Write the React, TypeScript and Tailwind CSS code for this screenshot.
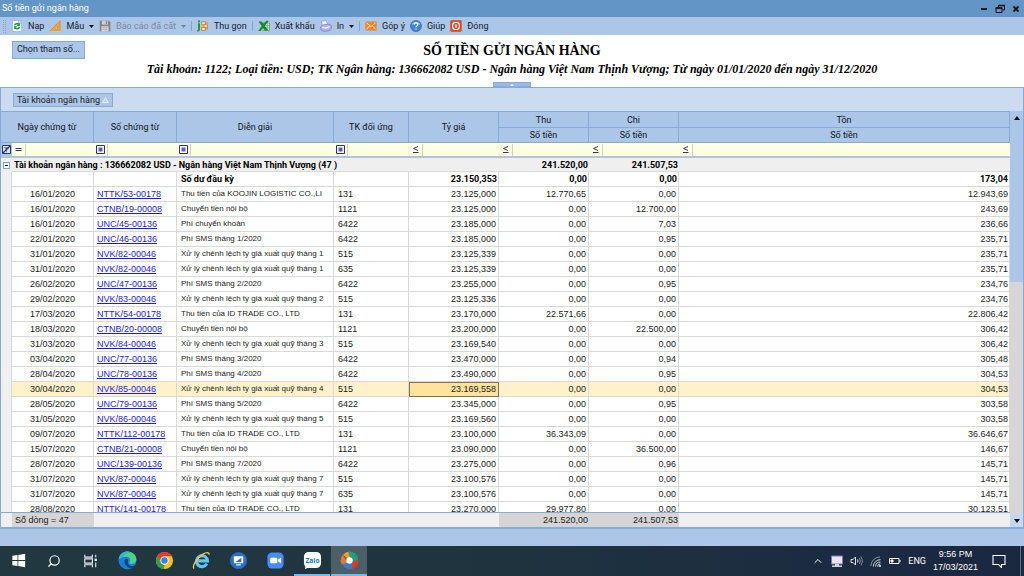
import type { ReactNode } from "react";
import { ChevronUp, Search } from "lucide-react";

type Row = [string, string, string, string, string, string, string, string];

const ROWS: Row[] = [
  ["16/01/2020", "NTTK/53-00178", "Thu tiền của KOOJIN LOGISTIC CO.,LI", "131", "23.125,000", "12.770,65", "0,00", "12.943,69"],
  ["16/01/2020", "CTNB/19-00008", "Chuyển tiền nội bộ", "1121", "23.125,000", "0,00", "12.700,00", "243,69"],
  ["16/01/2020", "UNC/45-00136", "Phí chuyển khoản", "6422", "23.185,000", "0,00", "7,03", "236,66"],
  ["22/01/2020", "UNC/46-00136", "Phí SMS tháng 1/2020", "6422", "23.185,000", "0,00", "0,95", "235,71"],
  ["31/01/2020", "NVK/82-00046", "Xử lý chênh lệch tỷ giá xuất quỹ tháng 1", "515", "23.125,339", "0,00", "0,00", "235,71"],
  ["31/01/2020", "NVK/82-00046", "Xử lý chênh lệch tỷ giá xuất quỹ tháng 1", "635", "23.125,339", "0,00", "0,00", "235,71"],
  ["26/02/2020", "UNC/47-00136", "Phí SMS tháng 2/2020", "6422", "23.255,000", "0,00", "0,95", "234,76"],
  ["29/02/2020", "NVK/83-00046", "Xử lý chênh lệch tỷ giá xuất quỹ tháng 2", "515", "23.125,336", "0,00", "0,00", "234,76"],
  ["17/03/2020", "NTTK/54-00178", "Thu tiền của ID TRADE CO., LTD", "131", "23.170,000", "22.571,66", "0,00", "22.806,42"],
  ["18/03/2020", "CTNB/20-00008", "Chuyển tiền nội bộ", "1121", "23.200,000", "0,00", "22.500,00", "306,42"],
  ["31/03/2020", "NVK/84-00046", "Xử lý chênh lệch tỷ giá xuất quỹ tháng 3", "515", "23.169,540", "0,00", "0,00", "306,42"],
  ["03/04/2020", "UNC/77-00136", "Phí SMS tháng 3/2020", "6422", "23.470,000", "0,00", "0,94", "305,48"],
  ["28/04/2020", "UNC/78-00136", "Phí SMS tháng 4/2020", "6422", "23.490,000", "0,00", "0,95", "304,53"],
  ["30/04/2020", "NVK/85-00046", "Xử lý chênh lệch tỷ giá xuất quỹ tháng 4", "515", "23.169,558", "0,00", "0,00", "304,53"],
  ["28/05/2020", "UNC/79-00136", "Phí SMS tháng 5/2020", "6422", "23.345,000", "0,00", "0,95", "303,58"],
  ["31/05/2020", "NVK/86-00046", "Xử lý chênh lệch tỷ giá xuất quỹ tháng 5", "515", "23.169,560", "0,00", "0,00", "303,58"],
  ["09/07/2020", "NTTK/112-00178", "Thu tiền của ID TRADE CO., LTD", "131", "23.100,000", "36.343,09", "0,00", "36.646,67"],
  ["15/07/2020", "CTNB/21-00008", "Chuyển tiền nội bộ", "1121", "23.090,000", "0,00", "36.500,00", "146,67"],
  ["28/07/2020", "UNC/139-00136", "Phí SMS tháng 7/2020", "6422", "23.275,000", "0,00", "0,96", "145,71"],
  ["31/07/2020", "NVK/87-00046", "Xử lý chênh lệch tỷ giá xuất quỹ tháng 7", "515", "23.100,576", "0,00", "0,00", "145,71"],
  ["31/07/2020", "NVK/87-00046", "Xử lý chênh lệch tỷ giá xuất quỹ tháng 7", "635", "23.100,576", "0,00", "0,00", "145,71"],
  ["28/08/2020", "NTTK/141-00178", "Thu tiền của ID TRADE CO., LTD", "131", "23.270,000", "29.977,80", "0,00", "30.123,51"],
];

const SELECTED = 13;

/* ---------- toolbar icons ---------- */

function Icon({ children }: { children: ReactNode }) {
  return (
    <svg viewBox="0 0 12 12" className="size-[12px] shrink-0" aria-hidden>
      {children}
    </svg>
  );
}

const reloadIcon = (
  <Icon>
    <path d="M1.5 .5h6l3 3v8h-9z" fill="#fff" stroke="#8fb0dc" strokeWidth=".7" />
    <path d="M7.5 .5v3h3" fill="#dbe8f8" stroke="#8fb0dc" strokeWidth=".7" />
    <path d="M3.6 5.4C4 3.5 6.7 3 7.7 4.6M8.3 6.8C8 8.9 5.2 9.3 4.1 7.7" fill="none" stroke="#1c9a34" strokeWidth="1.6" />
    <path d="M9 2.8v3.3H5.8zM3 9.5V6.3h3z" fill="#1c9a34" />
  </Icon>
);

const rulerIcon = (
  <Icon>
    <path d="M11 .8v10.4H.8z" fill="#f0a63c" stroke="#c97a1c" strokeWidth=".6" />
    <path d="M8.6 5.800v3.200H5.400z" fill="#c5d6ec" stroke="#c97a1c" strokeWidth=".5" />
    <path d="M1 11.400h10.400" stroke="#e8d59a" strokeWidth=".8" />
  </Icon>
);

const diskIcon = (
  <Icon>
    <path d="M.7.700h9.300l1.400 1.400v9.200H.7z" fill="#868686" />
    <path d="M3 .8h6v3.800H3z" fill="#c9d2dc" />
    <path d="M6.800 1.300h1.300v2.600H6.800z" fill="#777" />
    <path d="M2.500 6.300h7v4.900h-7z" fill="#d8dde3" />
    <path d="M3.500 7.700h5M3.500 9.400h5" stroke="#999" strokeWidth=".7" />
  </Icon>
);

const collapseIcon = (
  <Icon>
    <path d="M1 .6h2v1.600H1zM1 3.200h2v6.500L1.800 11.400H.2V10H1z" fill="#1d9a35" />
    <path d="M4 3h7M4 8.800h7" stroke="#e08a34" strokeWidth="1.100" />
    <rect x="4.800" y="1.800" width="3.400" height="3" fill="#fff0d8" stroke="#d97b28" strokeWidth=".9" />
    <rect x="7" y="4.700" width="3.400" height="3" fill="#fff0d8" stroke="#d97b28" strokeWidth=".9" />
    <rect x="4.800" y="7.500" width="3.400" height="3" fill="#fff0d8" stroke="#d97b28" strokeWidth=".9" />
  </Icon>
);

const excelIcon = (
  <Icon>
    <path d="M5 3h6.500v7.500H5z" fill="#e6f4e4" stroke="#4aa04c" strokeWidth=".7" />
    <path d="M7 5.500h4.500M7 8h4.500M9.200 3v7.500" stroke="#4aa04c" strokeWidth=".6" />
    <path d="M.5 1.500h3.300l1.700 2.300L8.400.8h2.400L6.900 5.700l3.300 4.800H6.800L5 7.900 2.400 11H.2l3.500-4.900z" fill="#1b8a2c" />
  </Icon>
);

const printIcon = (
  <Icon>
    <path d="M2.400 5.600 1.500 1.400 6 .6l2 3.900z" fill="#f5faff" stroke="#6f9ed6" strokeWidth=".7" />
    <path d="M.7 7C1.600 4.300 9.300 3 11.300 5.600v3.200c-1 2.500-8.400 3.400-10.600.8z" fill="#b4b2e4" stroke="#6f74bd" strokeWidth=".7" />
    <path d="M2.300 7.200c2 .9 5.500.5 7.300-.8" fill="none" stroke="#f3f2ff" strokeWidth="1.200" />
  </Icon>
);

const mailIcon = (
  <Icon>
    <rect x=".3" y="1.500" width="11.400" height="9" fill="#f08426" />
    <path d="M1.500 2.900 6 6.600l4.500-3.700M1.500 9.300l3-3.300M10.500 9.300l-3-3.300" fill="none" stroke="#fff3e2" strokeWidth=".9" />
  </Icon>
);

const helpIcon = (
  <Icon>
    <circle cx="6" cy="6" r="5.500" fill="#3f86d8" stroke="#2a62b0" strokeWidth=".7" />
    <path d="M1.800 4.800a4.400 4.400 0 0 1 8.400 0C7.500 3.700 4.500 3.700 1.800 4.800z" fill="#9cc6f4" />
    <path d="M4.300 4.500c.1-2 3.500-2 3.500.1C7.800 5.900 6 5.900 6 7.300M6 8.400v1.200" fill="none" stroke="#fff" strokeWidth="1.200" />
  </Icon>
);

const closeIcon = (
  <Icon>
    <rect x=".6" y=".6" width="10.800" height="10.800" rx=".8" fill="#e2512b" stroke="#b93a1c" strokeWidth=".5" />
    <rect x="2.700" y="2.500" width="6.600" height="7" rx="2.500" fill="none" stroke="#fff" strokeWidth="1.100" />
    <path d="M6 4.300v3.400" stroke="#fff" strokeWidth="1.200" />
  </Icon>
);

function Caret({ muted }: { muted?: boolean }) {
  return (
    <svg viewBox="0 0 5 3" className="h-[3px] w-[5px]" aria-hidden>
      <path d="M0 0h5L2.500 3z" fill={muted ? "#6b7f98" : "#111"} />
    </svg>
  );
}

function Tool({ icon, text, menu, disabled }: { icon: ReactNode; text: string; menu?: boolean; disabled?: boolean }) {
  return (
    <button type="button" disabled={disabled} className="flex items-center gap-[5px] whitespace-nowrap text-[#15202e] disabled:text-[#7a8a9e]">
      {icon}
      {text}
      {menu && <Caret muted={disabled} />}
    </button>
  );
}

function Sep() {
  return <span className="h-[10px] w-px bg-[#7ea3d4]" />;
}

function Toolbar() {
  return (
    <div className="flex h-[18px] shrink-0 items-center gap-[5px] bg-[#abc6e6] pl-[3px] font-['Roboto',sans-serif] text-[9px] leading-[12px]">
      <span className="h-[13px] w-[3px] border-x border-dotted border-[#86a5cc]" />
      <Tool icon={reloadIcon} text="Nạp" />
      <Tool icon={rulerIcon} text="Mẫu" menu />
      <Tool icon={diskIcon} text="Báo cáo đã cất" menu disabled />
      <Sep />
      <Tool icon={collapseIcon} text="Thu gọn" />
      <Sep />
      <Tool icon={excelIcon} text="Xuất khẩu" />
      <Tool icon={printIcon} text="In" menu />
      <Sep />
      <Tool icon={mailIcon} text="Góp ý" />
      <Tool icon={helpIcon} text="Giúp" />
      <Tool icon={closeIcon} text="Đóng" />
    </div>
  );
}

function TitleBar() {
  return (
    <header className="flex h-[17px] shrink-0 items-center justify-between bg-[#6495c7] pr-[3px] pl-[2px] font-['Roboto',sans-serif] text-[9px] text-white">
      <span>Sổ tiền gửi ngân hàng</span>
      <div className="flex gap-[6px]">
        <button type="button" aria-label="Thu nhỏ">
          <svg viewBox="0 0 10 10" className="size-[10px]"><path d="M2 5h6" stroke="#111" strokeWidth="1.800" /></svg>
        </button>
        <button type="button" aria-label="Khôi phục">
          <svg viewBox="0 0 10 10" className="size-[10px]" fill="none" stroke="#111">
            <path d="M3.500 3.500v-2h6v4.500H7.500" />
            <path d="M3 1.500h7" strokeWidth="1.500" />
            <path d="M1 4h6v4.500H1z" />
            <path d="M.5 4h7" strokeWidth="1.500" />
          </svg>
        </button>
        <button type="button" aria-label="Đóng cửa sổ">
          <svg viewBox="0 0 10 10" className="size-[10px]"><path d="m2.500 2.500 5 5m0-5-5 5" stroke="#111" strokeWidth="1.900" /></svg>
        </button>
      </div>
    </header>
  );
}

/* ---------- grid ---------- */

function Cols() {
  return (
    <colgroup>
      <col className="w-[11px]" />
      <col className="w-[82px]" />
      <col className="w-[83px]" />
      <col className="w-[157px]" />
      <col className="w-[75px]" />
      <col className="w-[90px]" />
      <col className="w-[90px]" />
      <col className="w-[90px]" />
      <col />
    </colgroup>
  );
}

const HEAD = "border-t border-r border-[#86abd8] bg-[#abc6e6] p-0 font-normal text-[#10151c]";

function Op({ kind }: { kind: "eq" | "box" | "le" }) {
  if (kind === "box") {
    return (
      <svg viewBox="0 0 9 9" className="size-[9px]" aria-hidden>
        <path d="M.5.500h8v8h-8z" fill="#fff" stroke="#33336b" />
        <path d="M2.500 2.500h4v4h-4z" fill="#5b5bd0" />
      </svg>
    );
  }
  return (
    <svg viewBox="0 0 9 9" className="size-[9px]" fill="none" stroke="#33336b" aria-hidden>
      {kind === "eq" ? <path d="M1.500 3.500h6M1.500 5.500h6" /> : <path d="M7 1.500 2.500 3.500 7 5.500M2 7.500h5.500" />}
    </svg>
  );
}

const FILTERS: { label: string; kind: "eq" | "box" | "le" }[] = [
  { label: "Ngày chứng từ", kind: "eq" },
  { label: "Số chứng từ", kind: "box" },
  { label: "Diễn giải", kind: "box" },
  { label: "TK đối ứng", kind: "box" },
  { label: "Tỷ giá", kind: "le" },
  { label: "Thu", kind: "le" },
  { label: "Chi", kind: "le" },
  { label: "Tồn", kind: "le" },
];

function GridHead() {
  return (
    <thead className="font-['Roboto',sans-serif]">
      <tr className="h-[16px]">
        <th colSpan={2} rowSpan={2} className={`${HEAD} border-b`}>Ngày chứng từ</th>
        <th rowSpan={2} className={`${HEAD} border-b`}>Số chứng từ</th>
        <th rowSpan={2} className={`${HEAD} border-b`}>Diễn giải</th>
        <th rowSpan={2} className={`${HEAD} border-b`}>TK đối ứng</th>
        <th rowSpan={2} className={`${HEAD} border-b`}>Tỷ giá</th>
        <th className={HEAD}>Thu</th>
        <th className={HEAD}>Chi</th>
        <th className={HEAD}>Tồn</th>
      </tr>
      <tr className="h-[16px]">
        <th className={`${HEAD} border-b`}>Số tiền</th>
        <th className={`${HEAD} border-b`}>Số tiền</th>
        <th className={`${HEAD} border-b`}>Số tiền</th>
      </tr>
      <tr className="h-[15px]">
        <td className="border-b-2 border-[#b0c6dc] bg-[#abc6e6] p-0">
          <button type="button" aria-label="Xóa điều kiện lọc" className="block pl-px">
            <svg viewBox="0 0 9 9" className="size-[9px]">
              <path d="M.5.500h8v8h-8z" fill="#dfe6f5" stroke="#33336b" />
              <path d="M1.500 2h6L5 5v2.500L4 7V5z" fill="#7a86c4" />
              <path d="m1 8 7-7" stroke="#33336b" strokeWidth="1.200" />
            </svg>
          </button>
        </td>
        {FILTERS.map((f) => (
          <td key={f.label} className="border-b-2 border-[#b0c6dc] bg-[#ffffe1] p-0">
            <div className="flex h-[13px] items-center">
              <button type="button" aria-label={`Phép lọc ${f.label}`} className="pl-[2px]">
                <Op kind={f.kind} />
              </button>
              <input aria-label={`Lọc ${f.label}`} className="ml-[2px] h-[12px] w-full min-w-0 border-l border-[#d2d2c4] bg-transparent px-1 outline-none" />
            </div>
          </td>
        ))}
      </tr>
    </thead>
  );
}

const CELL = "overflow-hidden whitespace-nowrap border-r border-b border-[#d9d9d9] p-0";

function GridBody() {
  return (
    <tbody>
      <tr className="h-[14px] bg-[#efefef] font-['Roboto',sans-serif] text-black">
        <td className="p-0">
          <button type="button" aria-label="Thu gọn nhóm" className="ml-[2px] flex size-[7px] items-center justify-center border border-[#8aa2c4] bg-white">
            <span className="h-px w-[3px] bg-[#222]" />
          </button>
        </td>
        <td colSpan={5} className="border-b border-[#d9d9d9] p-0 pl-[2px] font-bold whitespace-nowrap">
          Tài khoản ngân hàng : 136662082 USD - Ngân hàng Việt Nam Thịnh Vượng (47 )
        </td>
        <td className="border-b border-[#d9d9d9] p-0 pr-px text-right font-bold">241.520,00</td>
        <td className="border-b border-[#d9d9d9] p-0 pr-px text-right font-bold">241.507,53</td>
        <td className="border-b border-[#d9d9d9] p-0" />
      </tr>
      <tr className="h-[15px] bg-white font-['Roboto',sans-serif] font-bold text-black">
        <td className="border-r border-[#d9d9d9] bg-[#f0f0f0] p-0" />
        <td className={CELL} />
        <td className={CELL} />
        <td className={`${CELL} pl-1`}>Số dư đầu kỳ</td>
        <td className={CELL} />
        <td className={`${CELL} pr-px text-right`}>23.150,353</td>
        <td className={`${CELL} pr-px text-right`}>0,00</td>
        <td className={`${CELL} pr-px text-right`}>0,00</td>
        <td className={`${CELL} pr-px text-right`}>173,04</td>
      </tr>
      {ROWS.map(([date, no, desc, acc, rate, inc, out, left], i) => (
        <tr key={i} className={`h-[15px] ${i === SELECTED ? "bg-[#fff2cb]" : "bg-white"}`}>
          <td className="border-r border-[#d9d9d9] bg-[#f0f0f0] p-0" />
          <td className={`${CELL} text-center`}>{date}</td>
          <td className={`${CELL} pl-[3px]`}>
            <a href="#" className="text-[#1a1aff] underline">{no}</a>
          </td>
          <td className={`${CELL} pl-1 text-[8px]`}>{desc}</td>
          <td className={`${CELL} pl-1`}>{acc}</td>
          <td className={`${CELL} pr-[2px] text-right ${i === SELECTED ? "bg-[#fde39b] outline outline-[#7d7350] -outline-offset-1" : ""}`}>{rate}</td>
          <td className={`${CELL} pr-[2px] text-right`}>{inc}</td>
          <td className={`${CELL} pr-[2px] text-right`}>{out}</td>
          <td className={`${CELL} pr-px text-right`}>{left}</td>
        </tr>
      ))}
    </tbody>
  );
}

function ScrollBar() {
  return (
    <div className="flex w-[13px] shrink-0 flex-col bg-[#d6d6d6]">
      <button type="button" aria-label="Cuộn lên" className="flex h-[14px] items-center justify-center bg-[#abc6e6]">
        <svg viewBox="0 0 6 4" className="h-[4px] w-[6px]"><path d="M0 4h6L3 0z" fill="#111" /></svg>
      </button>
      <div className="h-[157px] bg-[#abc6e6]" />
      <div className="flex-1" />
      <button type="button" aria-label="Cuộn xuống" className="flex h-[13px] items-center justify-center bg-[#c4d8f0]">
        <svg viewBox="0 0 6 4" className="h-[4px] w-[6px]"><path d="M0 0h6L3 4z" fill="#111" /></svg>
      </button>
    </div>
  );
}

function Grid() {
  return (
    <section className="flex min-h-0 flex-1 flex-col border border-b-2 border-[#86abd8] bg-[#cbdbf0] font-['Liberation_Sans',sans-serif] text-[9px] leading-[12px] text-[#1b1b1b]">
      <div className="flex h-[23px] shrink-0 items-center pl-[12px]">
        <button type="button" className="flex h-[14px] items-center gap-[2px] border border-[#86abd8] bg-[#abc6e6] px-[3px] font-['Roboto',sans-serif]">
          Tài khoản ngân hàng
          <svg viewBox="0 0 7 6" className="h-[6px] w-[7px]"><path d="M.7 5.500h5.600L3.500.700z" fill="#b9cfeb" stroke="#f4f8fd" strokeWidth=".8" /></svg>
        </button>
      </div>
      <div className="flex min-h-0 flex-1">
        <div className="flex min-w-0 flex-1 flex-col bg-white">
          <div className="min-h-0 flex-1 overflow-hidden">
            <table className="w-full table-fixed border-separate border-spacing-0">
              <Cols />
              <GridHead />
              <GridBody />
            </table>
          </div>
          <table className="w-full shrink-0 table-fixed border-separate border-spacing-0 border-t border-[#86abd8] bg-[#efefef]">
            <Cols />
            <tbody>
              <tr className="h-[14px]">
                <td className="p-0" />
                <td className="bg-[#d5d5d5] p-0 pl-[3px]">Số dòng = 47</td>
                <td className="p-0" colSpan={4} />
                <td className="bg-[#d5d5d5] p-0 pr-px text-right">241.520,00</td>
                <td className="bg-[#d5d5d5] p-0 pr-px text-right">241.507,53</td>
                <td className="p-0" />
              </tr>
            </tbody>
          </table>
        </div>
        <ScrollBar />
      </div>
    </section>
  );
}

/* ---------- taskbar ---------- */

function TaskButton({ label, active, open, children }: { label: string; active?: boolean; open?: boolean; children: ReactNode }) {
  return (
    <button
      type="button"
      aria-label={label}
      className={`flex h-full w-[36px] items-center justify-center border-b-2 ${
        active ? "border-[#76b9ed] bg-[#4d5f66]" : open ? "border-[#76b9ed]" : "border-transparent"
      }`}
    >
      <svg viewBox="0 0 20 20" className="size-[19px]">{children}</svg>
    </button>
  );
}

function Taskbar() {
  return (
    <footer className="flex h-[30px] shrink-0 items-center justify-between bg-linear-to-r from-[#22383f] via-[#1f333f] to-[#1a2740] font-['Open_Sans',sans-serif] text-white">
      <nav className="flex h-full items-center gap-px">
        <TaskButton label="Start">
          <path d="M3.500 5l5.500-.8v5.400H3.500zM9.800 4.100 17 3v6.600H9.800zM3.500 10.400H9v5.400l-5.500-.8zM9.800 10.400H17V17l-7.200-1.100z" fill="#fff" />
        </TaskButton>
        <button type="button" aria-label="Tìm kiếm" className="flex h-full w-[34px] items-center justify-center">
          <Search className="size-[14px] -scale-x-100" strokeWidth={2} />
        </button>
        <TaskButton label="Task View">
          <path d="M4 4v2.500h8V4M4 17v-2.500h8V17M4 8.300h8v4.400H4zM15.500 4v2.500M15.500 12v5" fill="none" stroke="#e6ebee" strokeWidth="1.200" />
          <path d="M14.300 8h2.400v2.500h-2.400z" fill="#e6ebee" />
        </TaskButton>
        <TaskButton label="Edge">
          <circle cx="10" cy="10" r="9.400" fill="#1783cf" />
          <path d="M.7 9C1.500 3.300 5.700.6 10 .6c5.500 0 9.400 4 9.400 8 0 3.300-2.500 4.900-5 4.900-2 0-2.900-.8-2.400-1.500 2.300-3.200-.2-6-3.600-6C5 6 1.500 7.300.7 9z" fill="#4fd08a" />
          <path d="M.7 9C1.500 3.300 5.700.6 10 .6c1.700 0 3 .4 4.200 1C9 2 6 3.500 5.500 6.400 3.500 6.800 1.500 7.600.7 9z" fill="#2fb4dc" />
          <path d="M7.700 8.500c-2.500 3.500.5 9.500 6 9.600 1.700-.3 3.500-1.700 4.500-3.200-4 2.200-8.800.2-7.700-4.500.2-1.700-1.200-2.800-2.800-1.900z" fill="#123f86" />
        </TaskButton>
        <TaskButton label="Chrome">
          <circle cx="10" cy="10" r="9" fill="#fbc116" />
          <path d="M17.800 5.500H10L6 12 2.200 5.500A9 9 0 0 1 17.800 5.500z" fill="#e33b2e" />
          <path d="M2.200 5.500 6.100 12.300 10 14.500l-.7 4.500A9 9 0 0 1 2.200 5.500z" fill="#2ba24c" />
          <circle cx="10" cy="10" r="4.400" fill="#fff" />
          <circle cx="10" cy="10" r="3.400" fill="#3f7ee8" />
        </TaskButton>
        <TaskButton label="Internet Explorer">
          <path d="M15.600 13.500A5.800 5.800 0 1 1 16.300 10.400H6.500" fill="none" stroke="#5ec8f2" strokeWidth="3.200" />
          <path d="M2 18.500C0 15.500 5 7.500 11.500 3.300c3.300-2 6.700-2.400 6.500.7" fill="none" stroke="#f5c842" strokeWidth="1.400" />
        </TaskButton>
        <TaskButton label="UltraViewer">
          <circle cx="10" cy="10" r="9" fill="#2a6fc4" />
          <rect x="5" y="5.500" width="10" height="7.500" rx="1" fill="#fff" />
          <path d="M7 11.500 13 7v4.500z" fill="#2a6fc4" />
          <path d="M7.500 14.600h5" stroke="#fff" strokeWidth="1.200" />
        </TaskButton>
        <TaskButton label="Zoom">
          <rect x="1.500" y="1.500" width="17" height="17" rx="5" fill="#4a8cf7" />
          <rect x="4.500" y="7" width="7.500" height="6" rx="1.300" fill="#fff" />
          <path d="m12.700 9 3-2v6l-3-2z" fill="#fff" />
        </TaskButton>
        <TaskButton label="Zalo" open>
          <path d="M6 1h8a5 5 0 0 1 5 5v7a5 5 0 0 1-5 5H5l-3 1 .5-2.500A5 5 0 0 1 1 13V6a5 5 0 0 1 5-5z" fill="#fff" />
          <text x="10" y="12.300" fontSize="7" fontWeight="700" textAnchor="middle" fill="#1672e8">Zalo</text>
        </TaskButton>
        {/* four-colour swirl, white hub */}
        <TaskButton label="MISA" active>
          <path d="M10 10 3 4a9.300 9.300 0 0 1 9-3z" fill="#f39a2e" />
          <path d="M2.900 4A9.300 9.300 0 0 0 2 14.500l6-2z" fill="#f2782a" />
          <path d="M9 1c6-1 10 3.500 10.300 9L13 11 10 6z" fill="#1f9f74" />
          <path d="M19.300 9.500c.3 5.500-3.500 9.200-8.300 9.900L9 14l5-3z" fill="#e5352c" />
          <path d="M2 13.500c2 4.300 5.500 6 9.500 5.700L13 13z" fill="#2f7fd6" />
          <circle cx="10" cy="10" r="3.400" fill="#fff" />
        </TaskButton>
      </nav>
      <div className="flex h-full items-center gap-[7px] text-[9px] leading-[13px]">
        <ChevronUp className="size-[12px]" strokeWidth={2} />
        <svg viewBox="0 0 12 12" className="size-[12px]">
          <path d="M.5 1h11v8H.5z" fill="#e8e6f2" stroke="#8078b4" />
          <path d="M4 9h4v1.500H4zM1 10.500h10V12H1z" fill="#d5d3e0" />
        </svg>
        <svg viewBox="0 0 13 12" className="h-[12px] w-[13px]" fill="none" stroke="#dfe4ea">
          <path d="M1 4.500h2L5.500 2v8L3 7.500H1z" />
          <path d="M7.500 4.500q1 1.500 0 3" />
          <path d="M9.300 3q2 3 0 6M11 1.500q3 4.500 0 9" stroke="#7d8b9c" />
        </svg>
        <svg viewBox="0 0 12 12" className="size-[11px]" fill="none" stroke="#dfe4ea">
          <path d="M1 11A10 10 0 0 1 11 1" stroke="#8d99a8" />
          <path d="M3.500 11.500A8 8 0 0 1 11.500 4M6 11.500A5.500 5.500 0 0 1 11.500 6.500M8.300 11.500a3 3 0 0 1 3-3" />
          <circle cx="10.800" cy="11" r=".8" fill="#fff" />
        </svg>
        <svg viewBox="0 0 13 8" className="h-[8px] w-[13px]" fill="none" stroke="#fff">
          <path d="M1.500 1.500h9.500v5H1.500zM12 3v2" />
          <path d="M3 3h2v2H3z" fill="#fff" />
        </svg>
        <span className="font-['Roboto',sans-serif]">ENG</span>
        <div className="text-center font-['Liberation_Sans',sans-serif]">
          <div>9:56 PM</div>
          <div>17/03/2021</div>
        </div>
        <button type="button" aria-label="Thông báo" className="flex h-full w-[28px] items-center justify-center">
          <svg viewBox="0 0 14 14" className="size-[14px]" fill="none" stroke="#fff" strokeWidth="1.100">
            <path d="M1 1.500h12v9H9.500v3l-3-3H1z" />
          </svg>
        </button>
        <button type="button" aria-label="Hiện màn hình nền" className="h-full w-1 border-l border-[#5f6c80]" />
      </div>
    </footer>
  );
}

export default function App() {
  return (
    <div className="flex h-screen flex-col overflow-hidden bg-[#abc6e6]">
      <TitleBar />
      <Toolbar />
      <div className="relative h-[52px] shrink-0 bg-white pt-[6px]">
        <button
          type="button"
          className="absolute top-[6px] left-[12px] h-[18px] border border-[#86abd8] bg-[#abc6e6] px-1 font-['Roboto',sans-serif] text-[9px] text-[#15202e]"
        >
          Chọn tham số...
        </button>
        <div className="text-center font-['Liberation_Serif',serif] font-bold text-black">
          <h1 className="text-[14px] leading-[19px]">SỔ TIỀN GỬI NGÂN HÀNG</h1>
          <p className="text-[12px] leading-[19px] italic">
            Tài khoản: 1122; Loại tiền: USD; TK Ngân hàng: 136662082 USD - Ngân hàng Việt Nam Thịnh Vượng; Từ ngày 01/01/2020 đến ngày 31/12/2020
          </p>
        </div>
        <button
          type="button"
          aria-label="Ẩn tham số"
          className="absolute bottom-0 left-1/2 flex h-[5px] w-[38px] -translate-x-1/2 items-center justify-center border border-[#86abd8] bg-[#9dbbe0]"
        >
          <svg viewBox="0 0 4 2" className="h-[2px] w-[4px]"><path d="M0 2h4L2 0z" fill="#fff" /></svg>
        </button>
      </div>
      <Grid />
      <div className="h-[17px] shrink-0" />
      <Taskbar />
    </div>
  );
}
